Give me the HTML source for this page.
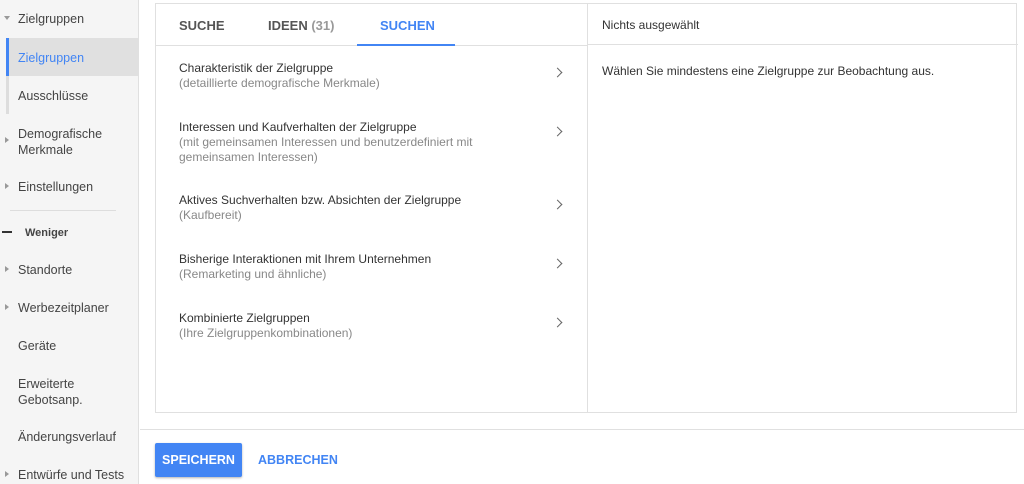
<!DOCTYPE html>
<html><head><meta charset="utf-8"><style>
*{margin:0;padding:0;box-sizing:border-box}
body{width:1024px;height:484px;overflow:hidden;background:#fff;font-family:"Liberation Sans",sans-serif;position:relative;color:#333}
.side{position:absolute;left:0;top:0;width:139px;height:484px;background:#f5f5f5;border-right:1px solid #e0e0e0}
.it{position:absolute;left:18px;font-size:12.5px;color:#444;line-height:16px}
.tri{position:absolute;left:5px;width:0;height:0;border-top:3px solid transparent;border-bottom:3px solid transparent;border-left:4px solid #999}
.card{position:absolute;left:155px;top:3px;width:862px;height:410px;border:1px solid #e0e0e0}
.tab{position:absolute;top:14px;font-size:13px;font-weight:bold;color:#555}
.row{position:absolute;left:23px;font-size:12px;line-height:15px;color:#333}
.row span{color:#888}
.chev{position:absolute;left:398px;width:7px;height:7px;border-top:1.5px solid #666;border-right:1.5px solid #666;transform:rotate(45deg)}
</style></head><body>
<div class="side">
<div class="tri" style="top:16px;left:4px;border-left:3px solid transparent;border-right:3px solid transparent;border-top:4px solid #999;border-bottom:0"></div>
<div class="it" style="top:11px">Zielgruppen</div>
<div style="position:absolute;left:6px;top:38px;width:133px;height:38px;background:#e0e0e0"></div>
<div style="position:absolute;left:6px;top:38px;width:3px;height:38px;background:#4285f4"></div>
<div style="position:absolute;left:6px;top:76px;width:3px;height:38px;background:#ddd"></div>
<div class="it" style="top:50px;color:#4285f4">Zielgruppen</div>
<div class="it" style="top:88px">Ausschlüsse</div>
<div class="tri" style="top:137px"></div>
<div class="it" style="top:126px">Demografische<br>Merkmale</div>
<div class="tri" style="top:183px"></div>
<div class="it" style="top:179px">Einstellungen</div>
<div style="position:absolute;left:10px;top:210px;width:106px;height:1px;background:#ddd"></div>
<div style="position:absolute;left:2px;top:231px;width:10px;height:2px;background:#333"></div>
<div class="it" style="top:225px;left:25px;font-size:11px;font-weight:bold">Weniger</div>
<div class="tri" style="top:266px"></div>
<div class="it" style="top:262px">Standorte</div>
<div class="tri" style="top:304px"></div>
<div class="it" style="top:300px">Werbezeitplaner</div>
<div class="it" style="top:338px">Geräte</div>
<div class="it" style="top:376px">Erweiterte<br>Gebotsanp.</div>
<div class="it" style="top:429px">Änderungsverlauf</div>
<div class="tri" style="top:471px"></div>
<div class="it" style="top:467px">Entwürfe und Tests</div>
</div>
<div class="card">
<div style="position:absolute;left:0;top:41px;width:431px;height:1px;background:#e0e0e0"></div>
<div style="position:absolute;left:431px;top:0;width:1px;height:408px;background:#e0e0e0"></div>
<div style="position:absolute;left:432px;top:40px;width:430px;height:1px;background:#e0e0e0"></div>
<div class="tab" style="left:23px">SUCHE</div>
<div class="tab" style="left:112px">IDEEN <span style="color:#999">(31)</span></div>
<div class="tab" style="left:224px;color:#4285f4">SUCHEN</div>
<div style="position:absolute;left:201px;top:40px;width:98px;height:2px;background:#4285f4"></div>
<div class="row" style="top:57px">Charakteristik der Zielgruppe<br><span>(detaillierte demografische Merkmale)</span></div><div class="chev" style="top:65px"></div>
<div class="row" style="top:116px">Interessen und Kaufverhalten der Zielgruppe<br><span>(mit gemeinsamen Interessen und benutzerdefiniert mit<br>gemeinsamen Interessen)</span></div><div class="chev" style="top:124px"></div>
<div class="row" style="top:189px">Aktives Suchverhalten bzw. Absichten der Zielgruppe<br><span>(Kaufbereit)</span></div><div class="chev" style="top:197px"></div>
<div class="row" style="top:248px">Bisherige Interaktionen mit Ihrem Unternehmen<br><span>(Remarketing und ähnliche)</span></div><div class="chev" style="top:256px"></div>
<div class="row" style="top:307px">Kombinierte Zielgruppen<br><span>(Ihre Zielgruppenkombinationen)</span></div><div class="chev" style="top:315px"></div>
<div style="position:absolute;left:446px;top:14px;font-size:12px">Nichts ausgewählt</div>
<div style="position:absolute;left:446px;top:60px;font-size:12px">Wählen Sie mindestens eine Zielgruppe zur Beobachtung aus.</div>
</div>
<div style="position:absolute;left:140px;top:429px;width:884px;height:1px;background:#e0e0e0"></div>
<div style="position:absolute;left:155px;top:443px;width:87px;height:34px;background:#4285f4;border-radius:2px;box-shadow:0 1px 2px rgba(0,0,0,.3);color:#fff;font-size:12.5px;font-weight:bold;line-height:34px;text-align:center">SPEICHERN</div>
<div style="position:absolute;left:258px;top:453px;color:#4285f4;font-size:12.5px;font-weight:bold">ABBRECHEN</div>
</body></html>
